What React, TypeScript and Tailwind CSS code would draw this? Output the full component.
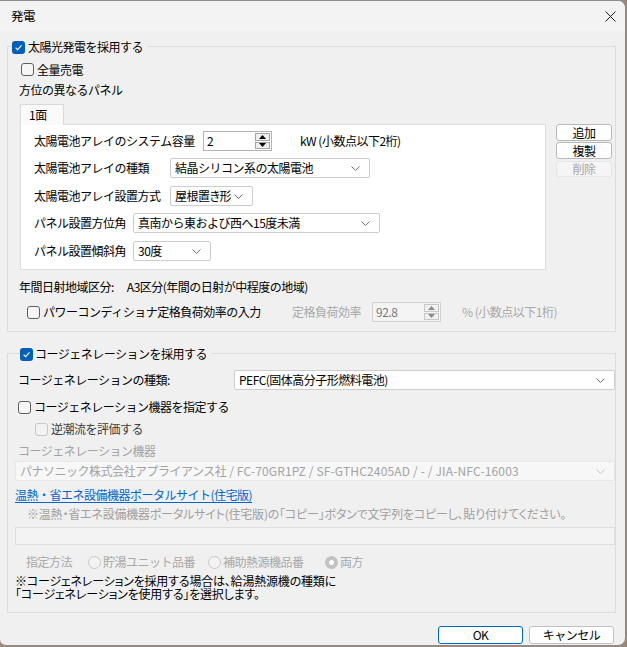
import React from "react";

const Chevron = ({ light }: { light?: boolean }) => (
  <svg width="9" height="5" viewBox="0 0 9 5" className="shrink-0">
    <path d="M0.5 0.5 L4.5 4.5 L8.5 0.5" stroke={light ? "#c4c4c4" : "#707070"} strokeWidth="1" fill="none" />
  </svg>
);

const Check = ({ checked, disabled }: { checked?: boolean; disabled?: boolean }) =>
  checked ? (
    <span className="w-[13px] h-[13px] rounded-[3px] bg-[#005fb8] flex items-center justify-center shrink-0">
      <svg width="9" height="9" viewBox="0 0 9 9">
        <path d="M1.6 4.7 L3.6 6.6 L7.5 2.4" stroke="white" strokeWidth="1.1" fill="none" />
      </svg>
    </span>
  ) : (
    <span
      className={`w-[13px] h-[13px] rounded-[3px] border shrink-0 ${
        disabled ? "border-[#c8c8c8] bg-[#f3f3f3]" : "border-[#5f5f5f] bg-[#f6f6f6]"
      }`}
    />
  );

const Radio = ({ checked }: { checked?: boolean }) =>
  checked ? (
    <span className="w-[13px] h-[13px] rounded-full bg-[#c2c2c2] flex items-center justify-center shrink-0">
      <span className="w-[5px] h-[5px] rounded-full bg-white" />
    </span>
  ) : (
    <span className="w-[13px] h-[13px] rounded-full border border-[#c8c8c8] bg-[#f3f3f3] shrink-0" />
  );

const Select = ({
  w,
  children,
  disabled,
}: {
  w: string;
  children: React.ReactNode;
  disabled?: boolean;
}) => (
  <div
    className={`${w} h-[20px] flex items-center justify-between pl-[4px] pr-[9px] border rounded-[2px] shrink-0 ${
      disabled ? "bg-[#f7f7f7] border-[#e6e6e6] text-[#a3a3a3]" : "bg-white border-[#cdcdcd] text-black"
    }`}
  >
    <span className="whitespace-nowrap">{children}</span>
    <Chevron light={disabled} />
  </div>
);

const Tri = ({ up, disabled }: { up?: boolean; disabled?: boolean }) => (
  <svg width="7" height="4" viewBox="0 0 7 4">
    <path d={up ? "M0 4 L3.5 0 L7 4 Z" : "M0 0 L3.5 4 L7 0 Z"} fill={disabled ? "#8a8a8a" : "#000"} />
  </svg>
);

const Spin = ({ value, disabled }: { value: string; disabled?: boolean }) => (
  <div
    className={`w-[69px] h-[20px] flex border shrink-0 ${
      disabled ? "bg-[#f4f4f4] border-[#d2d2d2] text-[#7a7a7a]" : "bg-white border-[#b4b4b4] text-black"
    }`}
  >
    <span className="flex-1 pl-[3px] leading-[17px]">{value}</span>
    <div className="w-[16px] flex flex-col gap-px py-px pr-px">
      <div
        className={`flex-1 flex items-center justify-center border ${
          disabled ? "border-[#c8c8c8] bg-[#f0f0f0]" : "border-[#a5a5a5] bg-[#f0f0f0]"
        }`}
      >
        <Tri up disabled={disabled} />
      </div>
      <div
        className={`flex-1 flex items-center justify-center border ${
          disabled ? "border-[#c8c8c8] bg-[#f0f0f0]" : "border-[#a5a5a5] bg-[#f0f0f0]"
        }`}
      >
        <Tri disabled={disabled} />
      </div>
    </div>
  </div>
);

const SideBtn = ({ label, disabled, cls }: { label: string; disabled?: boolean; cls: string }) => (
  <div
    className={`${cls} w-[56px] flex items-center justify-center rounded-[3px] border ${
      disabled ? "border-[#e6e6e6] bg-[#f5f5f5] text-[#a6a6a6]" : "border-[#b8b8b8] bg-white text-black"
    }`}
  >
    {label}
  </div>
);

export default function App() {
  return (
    <div className="w-[627px] h-[647px] bg-[#9c8878] overflow-hidden font-['Noto_Sans_CJK_JP',sans-serif] text-[12px] tracking-[-0.5px] leading-[18px] text-black">
      <div className="w-[626px] h-[646px] bg-[#f0f0f0] border-t border-r border-b border-[#8d8d8d] rounded-tr-[8px] rounded-br-[8px] rounded-bl-[6px] overflow-hidden flex flex-col">
        {/* title bar */}
        <div className="h-[30px] bg-[#f3f3f3] flex items-center justify-between pl-[11px] pr-[9px] shrink-0">
          <span className="text-[12.5px]">発電</span>
          <svg width="11" height="11" viewBox="0 0 11 11">
            <path d="M0.5 0.5 L10.5 10.5 M10.5 0.5 L0.5 10.5" stroke="#1a1a1a" strokeWidth="1" />
          </svg>
        </div>

        {/* group 1 */}
        <div className="relative mt-[15px] ml-[7px] w-[609px] border border-[#dcdcdc] flex flex-col pb-[9px]">
          <div className="absolute -top-[9px] left-[4px] bg-[#f0f0f0] flex items-center gap-[3px] pr-[4px] h-[18px]">
            <Check checked />
            <span>太陽光発電を採用する</span>
          </div>

          <div className="mt-[13px] h-[19px] pl-[13px] flex items-center gap-[3px]">
            <Check />
            <span>全量売電</span>
          </div>
          <div className="mt-[2px] h-[18px] pl-[11px] flex items-center">方位の異なるパネル</div>

          <div className="mt-[5px] pl-[12px] flex">
            <div className="flex flex-col">
              <div className="relative z-10 w-[44px] h-[21px] -mb-px bg-[#fafafa] border border-b-0 border-[#d9d9d9] pl-[8px] flex items-center">
                1面
              </div>
              <div className="w-[526px] h-[146px] bg-white border border-[#dcdcdc] pl-[13px] flex flex-col">
                <div className="mt-[6px] h-[20px] flex items-center">
                  <span className="w-[169px] shrink-0">太陽電池アレイのシステム容量</span>
                  <Spin value="2" />
                  <span className="ml-[28px] whitespace-nowrap">kW (小数点以下2桁)</span>
                </div>
                <div className="mt-[7px] h-[20px] flex items-center">
                  <span className="w-[136px] shrink-0">太陽電池アレイの種類</span>
                  <Select w="w-[200px]">結晶シリコン系の太陽電池</Select>
                </div>
                <div className="mt-[8px] h-[20px] flex items-center">
                  <span className="w-[136px] shrink-0">太陽電池アレイ設置方式</span>
                  <Select w="w-[83px]">
                    <span className="[font-feature-settings:'palt']">屋根置き形</span>
                  </Select>
                </div>
                <div className="mt-[7px] h-[20px] flex items-center">
                  <span className="w-[99px] shrink-0">パネル設置方位角</span>
                  <Select w="w-[247px]">真南から東および西へ15度未満</Select>
                </div>
                <div className="mt-[8px] h-[20px] flex items-center">
                  <span className="w-[99px] shrink-0">パネル設置傾斜角</span>
                  <Select w="w-[78px]">30度</Select>
                </div>
              </div>
            </div>
            <div className="ml-[10px] pt-[20px] flex flex-col">
              <SideBtn cls="h-[17px]" label="追加" />
              <SideBtn cls="h-[17px] mt-[1px]" label="複製" />
              <SideBtn cls="h-[16px] mt-[2px]" label="削除" disabled />
            </div>
          </div>

          <div className="mt-[8px] h-[18px] pl-[11px] flex items-center">
            <span>年間日射地域区分:</span>
            <span className="ml-[13px]">A3区分(年間の日射が中程度の地域)</span>
          </div>

          <div className="mt-[6px] h-[20px] pl-[19px] flex items-center">
            <div className="w-[265px] flex items-center gap-[3px] shrink-0">
              <Check />
              <span>パワーコンディショナ定格負荷効率の入力</span>
            </div>
            <span className="w-[80px] text-[#a8a8a8] shrink-0">定格負荷効率</span>
            <Spin value="92.8" disabled />
            <span className="ml-[21px] text-[#a8a8a8] whitespace-nowrap">% (小数点以下1桁)</span>
          </div>
        </div>

        {/* group 2 */}
        <div className="relative mt-[21px] ml-[7px] w-[609px] border border-[#dcdcdc] flex flex-col pb-[11px]">
          <div className="absolute -top-[9px] left-[12px] bg-[#f0f0f0] flex items-center gap-[2px] pr-[4px] h-[18px]">
            <Check checked />
            <span>コージェネレーションを採用する</span>
          </div>

          <div className="mt-[16px] h-[20px] pl-[10px] flex items-center">
            <span className="w-[216px] shrink-0">コージェネレーションの種類:</span>
            <Select w="w-[381px]">PEFC(固体高分子形燃料電池)</Select>
          </div>
          <div className="mt-[8px] h-[18px] pl-[10px] flex items-center gap-[3px]">
            <Check />
            <span>コージェネレーション機器を指定する</span>
          </div>
          <div className="mt-[4px] h-[18px] pl-[27px] flex items-center gap-[3px]">
            <Check disabled />
            <span className="text-[#3a3a3a]">逆潮流を評価する</span>
          </div>
          <div className="mt-[4px] h-[18px] pl-[10px] flex items-center text-[#a3a3a3]">コージェネレーション機器</div>
          <div className="mt-px pl-[7px] flex">
            <Select w="w-[600px]" disabled>
              <span>パナソニック株式会社アプライアンス社</span>
              <span className="tracking-[0.15px]"> / FC-70GR1PZ / SF-GTHC2405AD / - / JIA-NFC-16003</span>
            </Select>
          </div>
          <div className="mt-[5px] h-[18px] pl-[7px] flex items-center">
            <span className="text-[#0066cc] underline underline-offset-2">温熱・省エネ設備機器ポータルサイト(住宅版)</span>
          </div>
          <div className="mt-px h-[18px] pl-[19px] flex items-center text-[#a0a0a0] whitespace-nowrap [font-feature-settings:'palt'] tracking-[-0.2px]">
            ※温熱・省エネ設備機器ポータルサイト(住宅版)の「コピー」ボタンで文字列をコピーし、貼り付けてください。
          </div>
          <div className="mt-[4px] ml-[7px] w-[600px] h-[18px] bg-[#f3f3f3] border border-[#dedede]" />
          <div className="mt-[8px] h-[18px] pl-[18px] flex items-center text-[#a8a8a8]">
            <span className="w-[62px] shrink-0">指定方法</span>
            <div className="w-[120px] flex items-center gap-[2px] shrink-0">
              <Radio />
              <span>貯湯ユニット品番</span>
            </div>
            <div className="w-[117px] flex items-center gap-[2px] shrink-0">
              <Radio />
              <span>補助熱源機品番</span>
            </div>
            <div className="flex items-center gap-[2px]">
              <Radio checked />
              <span>両方</span>
            </div>
          </div>
          <div className="mt-[3px] pl-[7px] flex flex-col leading-[14px] [font-feature-settings:'palt'] tracking-[-0.2px]">
            <span className="h-[13px]">※コージェネレーションを採用する場合は、給湯熱源機の種類に</span>
            <span className="h-[14px]">「コージェネレーションを使用する」を選択します。</span>
          </div>
        </div>

        {/* footer */}
        <div className="mt-[13px] pr-[11px] flex justify-end gap-[6px]">
          <div className="w-[85px] h-[18px] rounded-[3px] border border-[#0067c0] bg-white flex items-center justify-center">
            OK
          </div>
          <div className="w-[85px] h-[18px] rounded-[3px] border border-[#c2c2c2] bg-white flex items-center justify-center">
            キャンセル
          </div>
        </div>
      </div>
    </div>
  );
}
